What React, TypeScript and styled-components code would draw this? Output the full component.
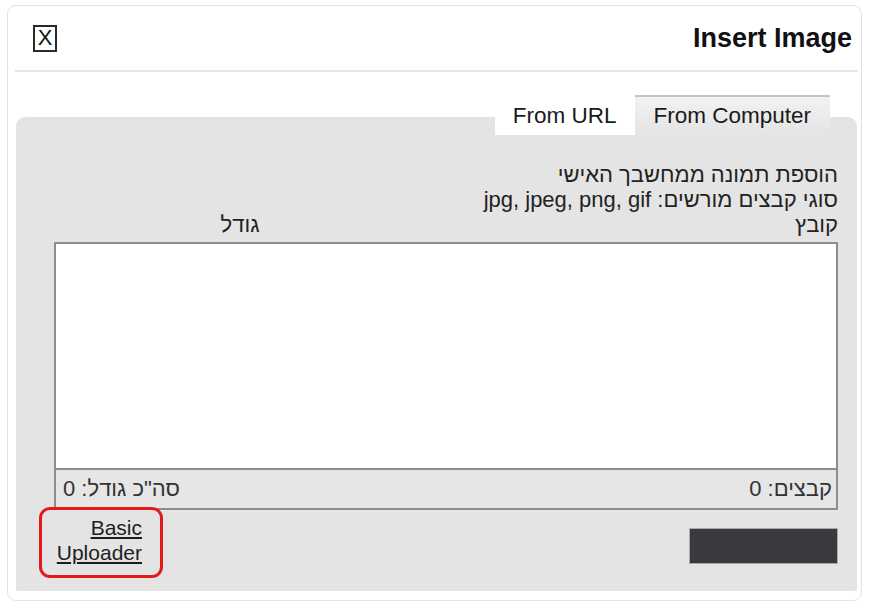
import { createGlobalStyle, styled } from "styled-components";

const GlobalStyle = createGlobalStyle`
    body {
        margin: 0;
        background: #ffffff;
        font-family: "Liberation Sans", Arial, sans-serif;
        color: #222222;
    }
`;

const App = () => {
    return (
        <>
            <GlobalStyle />
            <Dialog>
                <DialogHeader>
                    <CloseBox>X</CloseBox>
                    <Title>Insert Image</Title>
                </DialogHeader>

                <Body>
                    <TabsRow>
                        <Tab $active>From URL</Tab>
                        <Tab>From Computer</Tab>
                    </TabsRow>

                    <Panel dir="rtl">
                        <Info>
                            <Line>הוספת תמונה ממחשבך האישי</Line>
                            <Line>סוגי קבצים מורשים: jpg, jpeg, png, gif</Line>
                        </Info>

                        <FileHead>
                            <HeadCell>קובץ</HeadCell>
                            <HeadCell $center>גודל</HeadCell>
                        </FileHead>

                        <FileTable>
                            <FileList />
                            <FileFooter>
                                <span>קבצים: 0</span>
                                <span>סה"כ גודל: 0</span>
                            </FileFooter>
                        </FileTable>

                        <BottomRow>
                            <UploadButton />
                            <LinkFrame dir="ltr">
                                <BasicLink href="#">
                                    Basic
                                    <br />
                                    Uploader
                                </BasicLink>
                            </LinkFrame>
                        </BottomRow>
                    </Panel>
                </Body>
            </Dialog>
        </>
    );
};

export default App;

const Dialog = styled.div`
    margin: 5px 0 0 7px;
    width: 855px;
    height: 596px;
    box-sizing: border-box;
    border: 1px solid #e2e2e2;
    border-radius: 9px;
    display: flex;
    flex-direction: column;
`;

const DialogHeader = styled.header`
    display: flex;
    align-items: center;
    justify-content: space-between;
    height: 64px;
    margin: 0 3px 0 7px;
    padding: 0 6px 0 18px;
    border-bottom: 2px solid #e6e6e6;
`;

const CloseBox = styled.div`
    width: 24px;
    height: 27px;
    box-sizing: border-box;
    border: 2px solid #2a2a2a;
    display: flex;
    align-items: center;
    justify-content: center;
    font-size: 22px;
    line-height: 1;
    color: #111111;
`;

const Title = styled.h1`
    margin: 0;
    font-size: 27px;
    font-weight: bold;
    color: #111111;
`;

const Body = styled.div`
    flex: 1;
    display: flex;
    flex-direction: column;
    padding: 23px 4px 9px 8px;
`;

const TabsRow = styled.div`
    display: flex;
    justify-content: flex-end;
    padding-right: 27px;
    margin-bottom: -18px;
    position: relative;
    z-index: 1;
`;

const Tab = styled.div<{ $active?: boolean }>`
    height: 40px;
    box-sizing: border-box;
    padding: 3px 19px 0 18px;
    font-size: 22.5px;
    line-height: 32px;
    color: #1a1a1a;
    background: ${(p) =>
        p.$active ? "#ffffff" : "linear-gradient(#f2f2f2, #e4e4e4)"};
    border-top: 2px solid ${(p) => (p.$active ? "#ffffff" : "#c4c4c4")};
`;

const Panel = styled.div`
    flex: 1;
    display: flex;
    flex-direction: column;
    background: #e4e4e4;
    border-radius: 9px 9px 2px 2px;
    padding: 45px 19px 0 38px;
`;

const Info = styled.div`
    display: flex;
    flex-direction: column;
`;

const Line = styled.div`
    font-size: 22px;
    line-height: 25px;
    color: #222222;
`;

const FileHead = styled.div`
    display: grid;
    grid-template-columns: 1fr 372px;
    font-size: 22px;
    line-height: 25px;
    margin-bottom: 5px;
`;

const HeadCell = styled.div<{ $center?: boolean }>`
    text-align: ${(p) => (p.$center ? "center" : "right")};
`;

const FileTable = styled.div`
    border: 2px solid #8c8c8c;
    display: flex;
    flex-direction: column;
`;

const FileList = styled.div`
    height: 224px;
    background: #ffffff;
    border-bottom: 2px solid #8c8c8c;
`;

const FileFooter = styled.div`
    height: 38px;
    display: flex;
    align-items: center;
    justify-content: space-between;
    padding: 0 4px 0 7px;
    font-size: 22px;
    color: #333333;
    background: #e6e6e6;
`;

const BottomRow = styled.div`
    display: flex;
    align-items: flex-start;
    justify-content: space-between;
    margin-left: -15px;
    margin-top: -3px;
`;

const UploadButton = styled.button`
    margin-top: 21px;
    width: 149px;
    height: 36px;
    background: #3a393f;
    border: 1px solid #a9a9a9;
    padding: 0;
`;

const LinkFrame = styled.div`
    width: 124px;
    height: 71px;
    box-sizing: border-box;
    border: 3px solid #e21a1a;
    border-radius: 11px;
    padding: 5px 18px 0 0;
    text-align: right;
`;

const BasicLink = styled.a`
    font-size: 21px;
    line-height: 25px;
    color: #1e1e1e;
    text-decoration: underline;
`;
